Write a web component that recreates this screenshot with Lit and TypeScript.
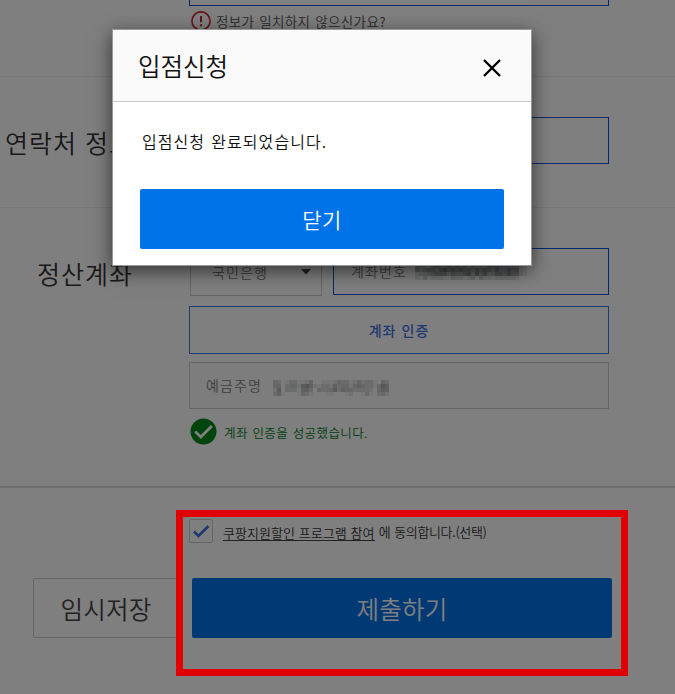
import { LitElement, html, svg, css } from "lit";
import { customElement, property } from "lit/decorators.js";

const ACCOUNT_MASK = [
  "5443565565656454546565555421",
  "5456657867676657676575575621",
  "2334566646556747574466575521",
  "2131222113221231322122222100",
];

const HOLDER_MASK = [
  "043013311240011124331242331043",
  "044034426752133253442454331475",
  "026033315530433463544333320465",
  "035100014310001100012001310342",
];

@customElement("pixel-mask")
class PixelMask extends LitElement {
  @property({ attribute: false }) rows: string[] = [];

  static styles = css`
    :host {
      display: block;
      flex: none;
    }
    .cells {
      display: block;
    }
  `;

  render() {
    const w = (this.rows[0]?.length ?? 0) * 4;
    const h = this.rows.length * 4;
    return html`<svg class="cells" width=${w} height=${h} shape-rendering="crispEdges">
      ${this.rows.map((row, y) =>
        [...row].map(
          (c, x) => svg`<rect x=${x * 4} y=${y * 4} width="4" height="4" fill="#10141c" fill-opacity=${Number(c) * 0.067}></rect>`
        )
      )}
    </svg>`;
  }
}

@customElement("app-root")
class AppRoot extends LitElement {
  static styles = css`
    :host {
      display: block;
      position: relative;
      width: 675px;
      height: 694px;
      overflow: hidden;
      background: #fff;
      color: #333;
      font-family: "Noto Sans CJK KR", "Noto Sans", sans-serif;
      font-weight: 350;
      white-space: nowrap;
    }
    * {
      box-sizing: border-box;
    }
    .page {
      display: flex;
      flex-direction: column;
      height: 694px;
    }
    .row {
      display: grid;
      grid-template-columns: 133px 420px;
      column-gap: 56px;
      border-bottom: 1px solid #eee;
    }
    .row.first {
      height: 77px;
    }
    .row.contact {
      height: 131px;
      padding-top: 40px;
    }
    .row.account {
      height: 280px;
      padding-top: 40px;
      border-bottom: 2px solid #dedede;
    }
    .label {
      height: 51px;
      line-height: 51px;
      font-size: 25px;
      letter-spacing: 1px;
      word-spacing: 1.5px;
      text-align: right;
    }
    .field {
      display: flex;
      align-items: center;
      height: 47px;
      border: 1px solid #0052d9;
      font-size: 14px;
      letter-spacing: 1.1px;
      color: #777;
    }
    .field.cut {
      height: 6px;
      border-top: 0;
    }
    .hint {
      display: flex;
      align-items: center;
      gap: 5px;
      height: 20px;
      margin: 5px 0 0 2px;
      font-size: 13.5px;
      letter-spacing: 0.35px;
      word-spacing: 1.6px;
      color: #555;
    }
    .hint svg,
    .result svg {
      flex: none;
    }
    .bank {
      display: grid;
      grid-template-columns: 132px 276px;
      justify-content: space-between;
      padding-left: 1px;
      height: 58px;
    }
    .select {
      display: flex;
      justify-content: space-between;
      align-items: center;
      height: 48px;
      padding: 0 10px 0 21px;
      border: 1px solid #ccc;
      font-size: 14px;
      letter-spacing: 1.1px;
      color: #777;
    }
    .select svg {
      margin-top: -1px;
    }
    .field.number {
      padding-left: 17px;
      gap: 8px;
    }
    .field span {
      margin-top: -2px;
    }
    .verify {
      height: 48px;
      line-height: 47px;
      border: 1px solid #4078e8;
      color: #3f6fe0;
      text-align: center;
      font-size: 14px;
      font-weight: 500;
      letter-spacing: 1px;
      word-spacing: 1px;
    }
    .field.holder {
      margin-top: 8px;
      padding-left: 16px;
      gap: 9px;
      border-color: #ccc;
      background: #fafafa;
      color: #808080;
    }
    .holder pixel-mask {
      opacity: 0.7;
      margin: 5px 0 0 -2px;
    }
    .result {
      display: flex;
      align-items: center;
      gap: 7px;
      height: 27px;
      margin: 9px 0 0 1px;
      font-size: 12.5px;
      letter-spacing: 0.4px;
      word-spacing: 1.4px;
      color: #00801a;
    }
    .result span {
      margin-top: 1px;
    }
    .agree {
      display: flex;
      align-items: center;
      height: 24px;
      margin: 31px 0 0 189px;
      font-size: 13px;
    }
    .box {
      flex: none;
      width: 24px;
      height: 24px;
      margin-right: 10px;
      border: 1px solid #ccc;
      border-radius: 2px;
    }
    .box svg {
      display: block;
    }
    .program {
      height: 17px;
      line-height: 17px;
      border-bottom: 1px solid #444;
      letter-spacing: 0.05px;
      word-spacing: 0.8px;
      margin-top: 2px;
    }
    .rest {
      line-height: 18px;
      margin: 1px 0 0 4px;
      letter-spacing: -0.35px;
      word-spacing: 1.4px;
    }
    .actions {
      display: flex;
      gap: 13px;
      margin: 35px 0 0 33px;
    }
    .save,
    .submit {
      height: 60px;
      line-height: 61px;
      text-align: center;
      font-size: 24.5px;
      letter-spacing: 0.2px;
      border-radius: 2px;
    }
    .save {
      width: 146px;
      border: 1px solid #ccc;
      line-height: 59px;
      color: #444;
    }
    .submit {
      width: 420px;
      background: #0073e9;
      color: #fff;
    }
    .dim {
      position: absolute;
      inset: 0;
      background: rgba(0, 0, 0, 0.5);
    }
    .frame {
      position: absolute;
      left: 176px;
      top: 510px;
      width: 452px;
      height: 166px;
      border: 7px solid #e00000;
    }
    .dialog {
      position: absolute;
      left: 112px;
      top: 29px;
      width: 420px;
      height: 237px;
      border: 1px solid #999;
      background: #fff;
      box-shadow: 0 5px 18px rgba(0, 0, 0, 0.6);
      color: #111;
    }
    .head {
      display: flex;
      justify-content: space-between;
      align-items: center;
      height: 72px;
      padding: 0 30px 0 25px;
      background: #fafafa;
      border-bottom: 1px solid #c8c8c8;
      font-size: 24.5px;
    }
    .head span {
      margin-top: -1px;
    }
    .head svg {
      margin-top: 5px;
    }
    .message {
      height: 87px;
      padding: 27px 0 0 29px;
      font-size: 16px;
      line-height: 24px;
      letter-spacing: 1.05px;
      word-spacing: 1.6px;
    }
    .close {
      width: 364px;
      height: 60px;
      margin-left: 27px;
      border-radius: 2px;
      background: #0073e9;
      color: #fff;
      line-height: 61px;
      text-align: center;
      font-size: 21px;
      letter-spacing: 0.5px;
    }
  `;

  render() {
    return html`
      <div class="page">
        <div class="row first">
          <div></div>
          <div>
            <div class="field cut"></div>
            <div class="hint">
              <svg width="20" height="20" viewBox="0 0 20 20">
                <circle cx="10" cy="10" r="9.1" fill="none" stroke="#d0202c" stroke-width="1.6"></circle>
                <path d="M10 5v6.3M10 13.2v2" stroke="#d0202c" stroke-width="2"></path>
              </svg>
              <span>정보가 일치하지 않으신가요?</span>
            </div>
          </div>
        </div>
        <div class="row contact">
          <div class="label">연락처 정보</div>
          <div class="field"></div>
        </div>
        <div class="row account">
          <div class="label">정산계좌</div>
          <div>
            <div class="bank">
              <div class="select">
                <span>국민은행</span>
                <svg width="10" height="6" viewBox="0 0 10 6"><path d="M0 0h10L5 5.5z" fill="#444"></path></svg>
              </div>
              <div class="field number">
                <span>계좌번호</span>
                <pixel-mask .rows=${ACCOUNT_MASK}></pixel-mask>
              </div>
            </div>
            <div class="verify">계좌 인증</div>
            <div class="field holder">
              <span>예금주명</span>
              <pixel-mask .rows=${HOLDER_MASK}></pixel-mask>
            </div>
            <div class="result">
              <svg width="27" height="27" viewBox="0 0 27 27">
                <circle cx="13.5" cy="13.5" r="13" fill="#00891a"></circle>
                <path d="M5.3 13.5l5.5 5.5L21.8 8" fill="none" stroke="#fff" stroke-width="2.8"></path>
              </svg>
              <span>계좌 인증을 성공했습니다.</span>
            </div>
          </div>
        </div>
        <div class="agree">
          <span class="box">
            <svg width="22" height="22" viewBox="0 0 22 22">
              <path d="M4 11.5l4.5 4.5L18.5 6" fill="none" stroke="#3f6fe0" stroke-width="2.6"></path>
            </svg>
          </span>
          <span class="program">쿠팡지원할인 프로그램 참여</span>
          <span class="rest">에 동의합니다.(선택)</span>
        </div>
        <div class="actions">
          <div class="save">임시저장</div>
          <div class="submit">제출하기</div>
        </div>
      </div>
      <div class="dim"></div>
      <div class="frame"></div>
      <div class="dialog">
        <div class="head">
          <span>입점신청</span>
          <svg width="18" height="18" viewBox="0 0 18 18">
            <path d="M1 1l16 16M17 1L1 17" stroke="#000" stroke-width="2.3"></path>
          </svg>
        </div>
        <div class="message">입점신청 완료되었습니다.</div>
        <div class="close">닫기</div>
      </div>
    `;
  }
}
